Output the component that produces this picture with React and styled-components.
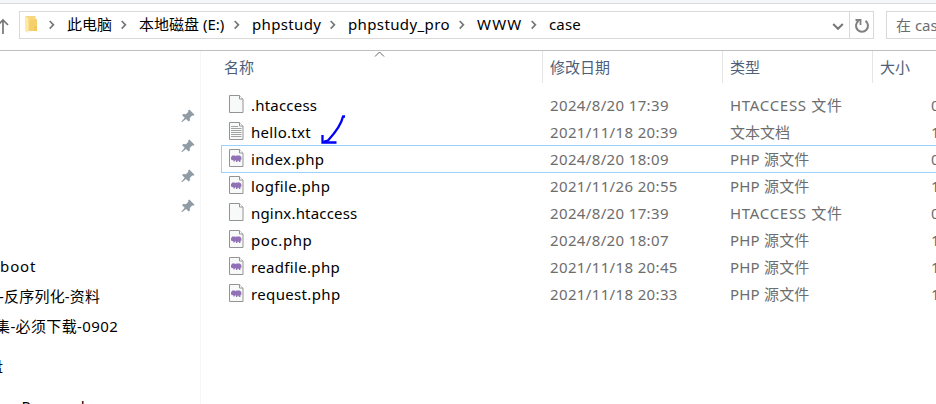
import React from "react";
import styled, { createGlobalStyle } from "styled-components";

const Global = createGlobalStyle`
  * { box-sizing: border-box; }
  html, body { margin: 0; overflow: hidden; background: #fff; }
  body { font: 15px/27px "Noto Sans", "Noto Sans CJK SC", sans-serif; color: #000; }
`;

const Window = styled.div`
  width: 936px;
  height: 404px;
  overflow: hidden;
  display: flex;
  flex-direction: column;
`;
const RibbonEdge = styled.div`
  flex: none;
  height: 4px;
  background: #f5f6f7;
  border-bottom: 1px solid #dadbdc;
`;
const Toolbar = styled.div`
  flex: none;
  height: 47px;
  display: flex;
  align-items: flex-start;
  padding-top: 7px;
  border-bottom: 1px solid #bfbfbf;
`;
const UpButton = styled.div`
  width: 19px;
  height: 28px;
  flex: none;
`;
const AddressBar = styled.div`
  flex: none;
  width: 855px;
  height: 28px;
  display: flex;
  border: 1px solid #d9d9d9;
`;
const Crumbs = styled.div`
  flex: 1;
  display: flex;
  line-height: 24px;
`;
const FolderSlot = styled.div`
  width: 28px;
  padding: 4px 0 0 5px;
  line-height: 0;
`;
const Crumb = styled.div`
  flex: none;
  display: flex;
  width: ${(p) => p.$width}px;
  letter-spacing: ${(p) => p.$track || 0}px;
  white-space: pre;
`;
const ChevronSlot = styled.span`
  flex: none;
  width: 19px;
  padding: 8px 0 0 1px;
  line-height: 0;
`;
const DropButton = styled.div`
  width: 18px;
  line-height: 0;
`;
const RefreshButton = styled.div`
  width: 24px;
  border-left: 1px solid #d9d9d9;
  line-height: 0;
`;
const SearchBox = styled.div`
  flex: none;
  margin-left: 12px;
  width: 220px;
  height: 28px;
  padding-left: 9px;
  border: 1px solid #d9d9d9;
  color: #6d6d6d;
  white-space: pre;
`;
const Body = styled.div`
  flex: 1;
  min-height: 0;
  display: flex;
`;
const NavPane = styled.div`
  flex: none;
  width: 201px;
  padding-top: 51px;
  border-right: 1px solid #f5f5f5;
  overflow: hidden;
`;
const PinRow = styled.div`
  height: 30px;
  padding: 7px 0 0 181px;
  line-height: 0;
`;
const NavItem = styled.div`
  height: ${(p) => p.$height || 30}px;
  line-height: 28px;
  margin-left: ${(p) => p.$left || 0}px;
  letter-spacing: ${(p) => p.$track || 0}px;
  white-space: pre;
`;
const FileList = styled.div`
  flex: none;
  width: 780px;
  padding-left: 20px;
`;
const HeaderRow = styled.div`
  height: 32px;
  display: flex;
  margin-bottom: 8px;
`;
const HeaderCell = styled.div`
  position: relative;
  flex: none;
  width: ${(p) => p.$width}px;
  padding-left: ${(p) => p.$pad}px;
  border-right: 1px solid #e5e5e5;
  line-height: 33px;
  color: #4c607a;
`;
const SortMark = styled.span`
  position: absolute;
  left: 153px;
  top: 0;
  line-height: 0;
`;
const FileRow = styled.div`
  height: 28px;
  margin-bottom: -1px;
  display: flex;
  white-space: pre;
  border: 1px solid ${(p) => (p.$focused ? "#99d1ff" : "transparent")};
  line-height: 26px;
`;
const IconCell = styled.div`
  flex: none;
  width: 29px;
  padding: 3px 0 0 7px;
  line-height: 0;
`;
const NameCell = styled.div`
  flex: none;
  width: 299px;
  letter-spacing: ${(p) => p.$track}px;
`;
const InfoCell = styled.div`
  flex: none;
  width: ${(p) => p.$width}px;
  color: #6d6d6d;
  letter-spacing: ${(p) => p.$track || 0}px;
`;
const Annotation = styled.svg`
  position: absolute;
  left: 320px;
  top: 114px;
`;

const Chevron = () => (
  <ChevronSlot>
    <svg width="6" height="10" viewBox="0 0 6 10">
      <path d="M.7 1 4.400 4.800.7 8.600" fill="none" stroke="#777" strokeWidth="1.700" />
    </svg>
  </ChevronSlot>
);

const Folder = () => (
  <svg width="14" height="18" viewBox="0 0 14 18">
    <path d="M1 0h9.500v15H1z" fill="#f7d77e" />
    <path d="M5 4 12 3v12H4z" fill="#f5cf6b" />
    <path d="M0 0 3.300 2v15L0 15z" fill="#ffe9a6" />
    <path d="M9 10h3v5H9z" fill="#f3c75b" />
  </svg>
);

const Pin = () => (
  <svg width="14" height="14" viewBox="0 0 14 14" fill="#8f9ca5">
    <path d="M8.300.5 13.500 5.700 12.400 6.800 11.200 6.500 8.800 8.900 8.900 11.400 7.700 12.500 5 9.900 1 13.300.3 12.700 3.700 8.700 1.100 6.200 2.200 5 4.900 5.200 7.400 2.800 7.100 1.600Z" />
  </svg>
);

const FileIcon = ({ kind }) => (
  <svg width="15" height="19" viewBox="0 0 15 19">
    <path d="M.5.5h10l3.500 3.500v13.500H.5z" fill="#f8f9f9" stroke="#949494" />
    <path d="M10.500.5v3.500h3.500" fill="#fff" stroke="#949494" />
    {kind === "text" && (
      <path d="M2 4.500h7M2 6.500h10.500M2 8.500h10.500M2 10.500h10.500M2 12.500h10.500M2 14.500h10.500" stroke="#a3a3a3" />
    )}
    {kind === "php" && (
      <path
        d="M2 8.200 3.300 6.500h2.300l1 .6 1-.6h3.300l1.400 1.600.2 2.600-.8-.3-.4 2.600h-1.400v-1.200H8.400v1.200H7v-1.700l-1.300.4v.9H4.400v-1.300L2.500 11 2 9.700z"
        fill="#9270b6"
      />
    )}
  </svg>
);

const crumbs = [
  { label: "此电脑", width: 72 },
  { label: "本地磁盘 (E:)", width: 113 },
  { label: "phpstudy", width: 96, track: 0.35 },
  { label: "phpstudy_pro", width: 129, track: 0.38 },
  { label: "WWW", width: 72, track: 1.2 },
  { label: "case", width: 60, track: 0.15 },
];

const files = [
  { name: ".htaccess", date: "2024/8/20 17:39", type: "HTACCESS 文件", size: "0 KB", track: 0.2 },
  { name: "hello.txt", date: "2021/11/18 20:39", type: "文本文档", size: "1 KB", kind: "text", track: 0.3 },
  { name: "index.php", date: "2024/8/20 18:09", type: "PHP 源文件", size: "0 KB", kind: "php", focused: true, track: 0.35 },
  { name: "logfile.php", date: "2021/11/26 20:55", type: "PHP 源文件", size: "1 KB", kind: "php", track: 0.37 },
  { name: "nginx.htaccess", date: "2024/8/20 17:39", type: "HTACCESS 文件", size: "0 KB", track: 0.18 },
  { name: "poc.php", date: "2024/8/20 18:07", type: "PHP 源文件", size: "1 KB", kind: "php", track: 0.6 },
  { name: "readfile.php", date: "2021/11/18 20:45", type: "PHP 源文件", size: "1 KB", kind: "php", track: 0.33 },
  { name: "request.php", date: "2021/11/18 20:33", type: "PHP 源文件", size: "1 KB", kind: "php", track: 0.35 },
];

const typeTrack = { "HTACCESS 文件": 0.7, "文本文档": 0, "PHP 源文件": 0.2 };

export default function App() {
  return (
    <Window>
      <Global />
      <RibbonEdge />
      <Toolbar>
        <UpButton>
          <svg width="12" height="28" viewBox="0 0 12 28">
            <path d="M3 23V9M-2 14 3 9l5 5" fill="none" stroke="#777" strokeWidth="1.700" />
          </svg>
        </UpButton>
        <AddressBar>
          <FolderSlot><Folder /></FolderSlot>
          <Crumbs>
            {crumbs.map((c) => (
              <Crumb key={c.label} $width={c.width} $track={c.track}>
                <Chevron />
                {c.label}
              </Crumb>
            ))}
          </Crumbs>
          <DropButton>
            <svg width="14" height="26" viewBox="0 0 14 26">
              <path d="m2.200 12 4.800 4.800L11.800 12" fill="none" stroke="#777" strokeWidth="2" />
            </svg>
          </DropButton>
          <RefreshButton>
            <svg width="22" height="26" viewBox="0 0 22 26">
              <path d="M8.500 8.900A6 6 0 1 0 15.500 8.900" fill="none" stroke="#808080" strokeWidth="2" />
              <path d="M5.500 8h5v5" fill="none" stroke="#808080" strokeWidth="1.800" />
            </svg>
          </RefreshButton>
        </AddressBar>
        <SearchBox>在 case 中搜索</SearchBox>
      </Toolbar>
      <Body>
        <NavPane>
          {[0, 1, 2, 3].map((i) => (
            <PinRow key={i}><Pin /></PinRow>
          ))}
          <NavItem />
          <NavItem $left={0} $track={0.9}>boot</NavItem>
          <NavItem $left={-1} $track={0.2}>-反序列化-资料</NavItem>
          <NavItem $height={40} $left={-5} $track={0.38}>集-必须下载-0902</NavItem>
          <NavItem $height={40} $left={-12}>盘</NavItem>
          <NavItem $left={-60} $track={0.22}>OneDrive - Personal</NavItem>
        </NavPane>
        <FileList>
          <HeaderRow>
            <HeaderCell $width={322} $pad={3}>
              名称
              <SortMark>
                <svg width="12" height="7" viewBox="0 0 12 7">
                  <path d="M1 5.500 5.500 1 10 5.500" fill="none" stroke="#666" />
                </svg>
              </SortMark>
            </HeaderCell>
            <HeaderCell $width={180} $pad={7}>修改日期</HeaderCell>
            <HeaderCell $width={150} $pad={7}>类型</HeaderCell>
            <HeaderCell $width={100} $pad={7}>大小</HeaderCell>
          </HeaderRow>
          {files.map((f) => (
            <FileRow key={f.name} $focused={f.focused}>
              <IconCell><FileIcon kind={f.kind} /></IconCell>
              <NameCell $track={f.track}>{f.name}</NameCell>
              <InfoCell $width={180} $track={0.36}>{f.date}</InfoCell>
              <InfoCell $width={201} $track={typeTrack[f.type]}>{f.type}</InfoCell>
              <InfoCell $width={60}>{f.size}</InfoCell>
            </FileRow>
          ))}
        </FileList>
      </Body>
      <Annotation width="28" height="32" viewBox="0 0 28 32">
        <path d="M25 2.500h-2C21 12 14 20 8 26.500l-4 1" fill="none" stroke="#0000f5" strokeWidth="2.300" strokeLinejoin="round" />
        <path d="M2.500 21v7.500h14" fill="none" stroke="#0000f5" strokeWidth="2.300" />
      </Annotation>
    </Window>
  );
}
